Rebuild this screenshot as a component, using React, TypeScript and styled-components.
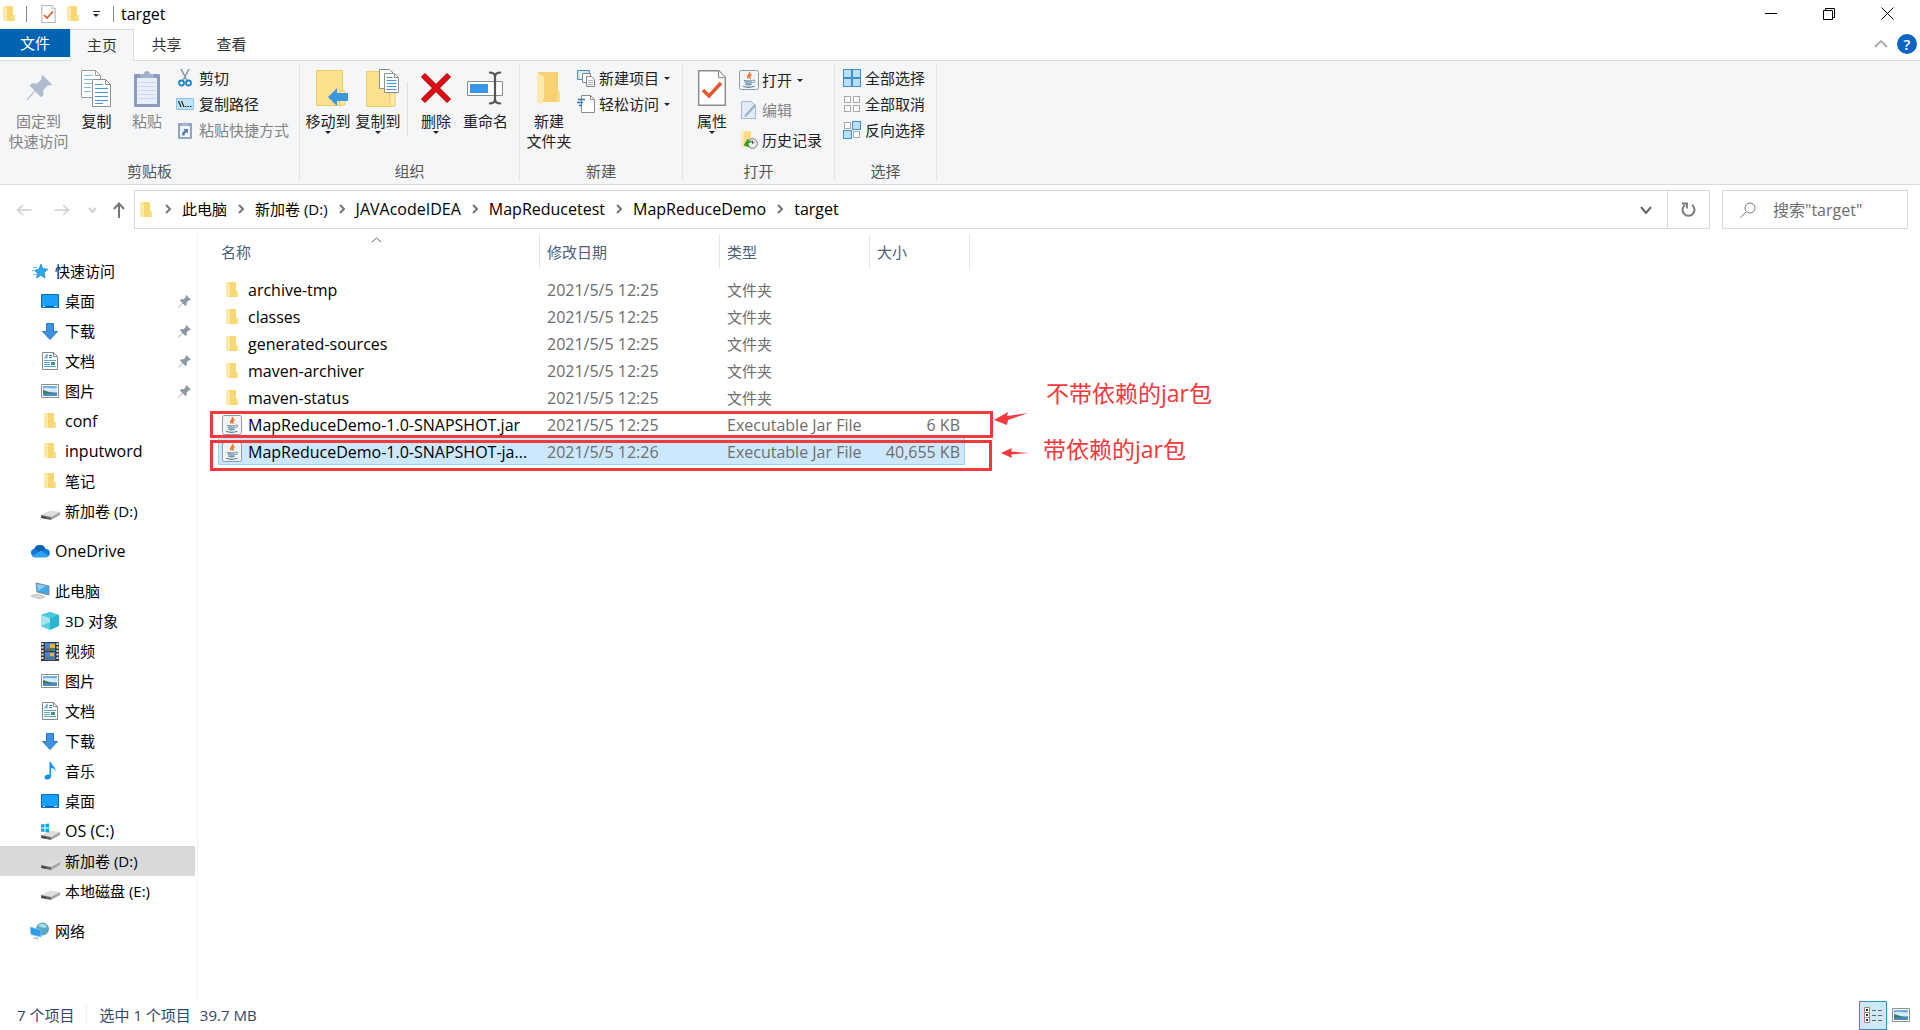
import React from "react";
import styled, { createGlobalStyle, css } from "styled-components";

const GlobalStyle = createGlobalStyle`
  *, *::before, *::after { box-sizing: border-box; }
  body {
    margin: 0;
    background: #fff;
    color: #000;
    font-family: "Open Sans", "Noto Sans CJK SC", sans-serif;
    font-size: 15px;
    line-height: 20px;
  }
  button, input {
    font: inherit;
    color: inherit;
    background: none;
    border: 0;
    padding: 0;
    margin: 0;
  }
  a { color: inherit; text-decoration: none; }
  svg { display: block; flex: none; }
`;

/* ---------- icons ---------- */

const FolderIcon = ({ w = 12, h = 16 }: { w?: number; h?: number }) => (
  <svg width={w} height={h} viewBox="0 0 12 16">
    <path d="M0 0h10v9h2v6H2L0 14z" fill="#f8d775" />
    <path d="M0 0h3l1 3v12.500L0 14z" fill="#fde9a9" />
    <path d="M10 9h2v6h-2z" fill="#fbe08c" />
  </svg>
);

const BigFolderIcon = () => (
  <svg width="26" height="36" viewBox="0 0 26 36">
    <path d="M2 2h20v19l2 1v10H7z" fill="#f6d275" />
    <path d="M1 2l7 5v21l-2 7-5-3z" fill="#fdeab0" />
    <path d="M22 21l2 1v10h-3z" fill="#fbdf8d" />
  </svg>
);

const CheckPageIcon = ({ w, h }: { w: number; h: number }) => (
  <svg width={w} height={h} viewBox="0 0 28 36">
    <path d="M.7.7h20l6.600 6.600v28H.7z" fill="#fff" stroke="#8a8a8a" strokeWidth="1.400" />
    <path d="M20.500.7v7h6.800" fill="#f2f2f2" stroke="#8a8a8a" strokeWidth="1" />
    <path d="M5 20l6 6L23 13" fill="none" stroke="#e2582d" strokeWidth="3.500" />
  </svg>
);

const PinIcon = ({ size, color }: { size: number; color: string }) => (
  <svg width={size} height={size} viewBox="0 0 26 26">
    <path d="M16.500 0L26 9.500l-3 1.200-1.200-.4-4.600 4.600.3 5-2.500 2.300-5.700-5.700L2 24.500l-2 1.500 1.200-2.400 7.500-8L3.500 10.500 6 8.300l5.200.1 4.500-4.400-.5-1.400z" fill={color} />
  </svg>
);

const CopyIcon = () => (
  <svg width="31" height="37" viewBox="0 0 31 37">
    <path d="M.5.5h14l5 5v22H.5z" fill="#fff" stroke="#9b9b9b" />
    <path d="M14.500.5v5h5" fill="none" stroke="#9b9b9b" />
    <path d="M3 5.500h9M3 9.500h9M3 13.500h9M3 17.500h7M3 21.500h7" stroke="#8ab6e8" />
    <path d="M11.500 9.500h13l5 5v22h-18z" fill="#fff" stroke="#8f8f8f" />
    <path d="M24.500 9.500v5h5" fill="none" stroke="#8f8f8f" />
    <path d="M14 14.500h8M14 18.500h13M14 22.500h13M14 26.500h13M14 30.500h13M14 33.500h8" stroke="#4c93dd" />
  </svg>
);

const PasteIcon = () => (
  <svg width="26" height="37" viewBox="0 0 26 37">
    <rect y="4" width="26" height="33" rx="1" fill="#8a9dbf" />
    <path d="M3 8h20v26H3z" fill="#e9eff8" />
    <path d="M4 12.500h18M4 16.500h18M4 20.500h18M4 24.500h18M4 28.500h18" stroke="#cdd9ea" />
    <path d="M6 8V4h4a3 3 0 0 1 6 0h4v4z" fill="#a3b2cc" />
  </svg>
);

const ScissorsIcon = () => (
  <svg width="14" height="18" viewBox="0 0 14 18">
    <path d="M3 0l6 11.500M11 0L5 11.500" stroke="#8d99a6" strokeWidth="1.600" />
    <circle cx="3.500" cy="14" r="2.500" fill="none" stroke="#1f86c9" strokeWidth="1.800" />
    <circle cx="10.500" cy="14" r="2.500" fill="none" stroke="#1f86c9" strokeWidth="1.800" />
  </svg>
);

const PathIcon = () => (
  <svg width="18" height="12" viewBox="0 0 18 12">
    <path d="M.5.5h17v11H.5z" fill="#bfe3fb" stroke="#8fc3e8" />
    <path d="M2.500 3l2.500 6M5.500 3l2.500 6" stroke="#222" strokeWidth="1.200" />
    <path d="M9 8.500h1.500M11.500 8.500H13M14 8.500h1.500" stroke="#222" />
  </svg>
);

const PasteShortcutIcon = () => (
  <svg width="14" height="18" viewBox="0 0 14 18">
    <rect y="2" width="14" height="16" rx="1" fill="#91a5c6" />
    <path d="M2 5h10v11H2z" fill="#eef3fa" />
    <path d="M4 5V2h2a1.200 1.200 0 0 1 2 0h2v3z" fill="#a9b7cf" />
    <path d="M4 14.500c0-3 .5-4 2.500-4.800L5.500 8H10v4.500L8.800 11.200C7 12 6.500 13 6.500 14.500z" fill="#5f7fae" />
  </svg>
);

const MoveToIcon = () => (
  <svg width="40" height="37" viewBox="-8 0 40 37">
    <path d="M.5.5h26v35H.5z" fill="#fbe18c" stroke="#eccb6a" />
    <path d="M24 21h5v14h-5z" fill="#fde9a9" stroke="#eccb6a" />
    <path d="M12 27l9-9v5h11v8H21v5z" fill="#3c96e4" />
  </svg>
);

const CopyToIcon = () => (
  <svg width="41" height="38" viewBox="-8 0 41 38">
    <path d="M.5 2.500h26v35H.5z" fill="#fbe18c" stroke="#eccb6a" />
    <path d="M24 24h5v13h-5z" fill="#fde9a9" stroke="#eccb6a" />
    <path d="M13.500.5h10l4 4v15h-14z" fill="#fff" stroke="#8f8f8f" />
    <path d="M18.500 4.500h10l4 4v15h-14z" fill="#fff" stroke="#8f8f8f" />
    <path d="M28.500 4.500v4h4" fill="none" stroke="#8f8f8f" />
    <path d="M20.500 8.500h6M20.500 11.500h10M20.500 14.500h10M20.500 17.500h10M20.500 20.500h10" stroke="#4c93dd" />
  </svg>
);

const DeleteIcon = () => (
  <svg width="32" height="32" viewBox="0 0 32 32">
    <path d="M3 3l26 26M29 3L3 29" stroke="#a5161c" strokeWidth="6" />
    <path d="M3 3l26 26M29 3L3 29" stroke="#e00b17" strokeWidth="4" />
  </svg>
);

const RenameIcon = () => (
  <svg width="37" height="34" viewBox="0 0 37 34">
    <path d="M.5 10.500h35v14H.5z" fill="#fff" stroke="#8b8b8b" />
    <path d="M3 13h18v9H3z" fill="#3a97e8" />
    <path d="M22 1.500c4 0 6 1 6 4v23c0 3-2 4-6 4M34 1.500c-4 0-6 1-6 4v23c0 3 2 4 6 4" fill="none" stroke="#555" strokeWidth="2.200" />
  </svg>
);

const NewItemIcon = () => (
  <svg width="18" height="18" viewBox="0 0 18 18">
    <path d="M.5 1.500h12v9H.5z" fill="#cfe7f3" stroke="#4f90ad" />
    <path d="M3 4h5v4H3z" fill="#fff" />
    <path d="M5.500 4.500h8v9h-8z" fill="#fff" stroke="#888" />
    <path d="M9.500 7.500h5l3 3v7h-8z" fill="#fff" stroke="#888" />
    <path d="M11 11.500h5M11 13.500h5M11 15.500h5" stroke="#a5b8c9" />
  </svg>
);

const EasyAccessIcon = () => (
  <svg width="18" height="18" viewBox="0 0 18 18">
    <path d="M4.500.5h9l4 4v13h-13z" fill="#fff" stroke="#8b8b8b" />
    <path d="M13.500.5v4h4" fill="none" stroke="#8b8b8b" />
    <path d="M1 4.500h7M0 7.500h6M2 10.500h3" stroke="#2f78b7" strokeWidth="1.500" />
  </svg>
);

const JavaIcon = () => (
  <svg width="20" height="20" viewBox="0 0 20 20">
    <rect x=".5" y=".5" width="19" height="19" rx="2" fill="#f3f4f5" stroke="#8f9aa5" />
    <path d="M10.500 2c1.500 2-3 3.500-1.500 6.500M12.500 4.500c-2 1-2.500 2-1 4" fill="none" stroke="#e8752a" strokeWidth="1.600" />
    <path d="M5 10.500c1 .8 7 .8 8.500 0M6 12.500c2 .8 5 .8 7 0M6.500 14.300c1.500.7 4 .7 6 0M4 16.300c3 1.200 8 1.200 11.500 0" fill="none" stroke="#5482a1" strokeWidth="1.200" />
    <path d="M14 10c2.500-.3 2 2.300-.5 2.600" fill="none" stroke="#5482a1" />
  </svg>
);

const EditIcon = () => (
  <svg width="16" height="18" viewBox="0 0 16 18">
    <path d="M.5.5h10l4 4v13H.5z" fill="#e3ebf6" stroke="#a8b8cf" />
    <path d="M3 15L13.500 3l2 1.500L5 16z" fill="#9db0cd" />
  </svg>
);

const HistoryIcon = () => (
  <svg width="18" height="18" viewBox="0 0 18 18">
    <path d="M1 0h10v16H1z" fill="#f9dc85" />
    <path d="M1 0h3v17l-3-2z" fill="#fdebb0" />
    <circle cx="12.500" cy="12.500" r="4.800" fill="#eee" stroke="#777" />
    <path d="M12.500 9.500v3l2-1.500" fill="none" stroke="#555" />
    <path d="M4 14l4-6v2.500c2-1 3-.5 4 .5-3 0-4 1-4 2.500l1.500 2.500z" fill="#28a428" stroke="#1d861d" strokeWidth=".5" />
  </svg>
);

type SquareState = [boolean, boolean, boolean, boolean];
const SelectIcon = ({ cells }: { cells: SquareState }) => {
  const spots = [[0, 0], [9, 0], [0, 9], [9, 9]];
  return (
    <svg width="18" height="18" viewBox="0 0 18 18">
      {spots.map(([x, y], i) =>
        cells[i] ? (
          <rect key={i} x={x + 0.5} y={y + 0.5} width="8" height="8" fill="#b9dffa" stroke="#3d8fd0" />
        ) : (
          <rect key={i} x={x + 1.5} y={y + 1.5} width="6" height="6" fill="#fff" stroke="#a9a9a9" />
        ),
      )}
    </svg>
  );
};

const Chevron = ({ dir, w, h, color, weight = 1 }: { dir: "right" | "down" | "up"; w: number; h: number; color: string; weight?: number }) => {
  const d =
    dir === "right"
      ? `M1 1L${w - 1} ${h / 2}L1 ${h - 1}`
      : dir === "down"
        ? `M1 1L${w / 2} ${h - 1}L${w - 1} 1`
        : `M1 ${h - 1}L${w / 2} 1L${w - 1} ${h - 1}`;
  return (
    <svg width={w} height={h} viewBox={`0 0 ${w} ${h}`}>
      <path d={d} fill="none" stroke={color} strokeWidth={weight} />
    </svg>
  );
};

const Arrow = ({ dir, color }: { dir: "left" | "right"; color: string }) => (
  <svg width="16" height="12" viewBox="0 0 16 12">
    <path d={dir === "left" ? "M7 1L1.500 6L7 11M1.500 6H15.500" : "M9 1l5.500 5L9 11M14.500 6H.5"} fill="none" stroke={color} strokeWidth="1.500" />
  </svg>
);

const UpArrow = () => (
  <svg width="12" height="16" viewBox="0 0 12 16">
    <path d="M1 7l5-5.500L11 7M6 1.500V16" fill="none" stroke="#777" strokeWidth="2" />
  </svg>
);

const RefreshIcon = () => (
  <svg width="15" height="16" viewBox="0 0 15 16">
    <path d="M11 3a6 6 0 1 1-7 0" fill="none" stroke="#777" strokeWidth="2" />
    <path d="M1 1.500h5v5" fill="none" stroke="#777" strokeWidth="1.800" />
  </svg>
);

const SearchIcon = () => (
  <svg width="16" height="16" viewBox="0 0 16 16">
    <circle cx="10" cy="6" r="5" fill="none" stroke="#7a7a7a" />
    <path d="M6.500 9.500L.5 15.500" stroke="#7a7a7a" />
  </svg>
);

const StarIcon = () => (
  <svg width="18" height="18" viewBox="0 0 18 18">
    <path d="M10 2l1.800 4.500 5.200.7-3.800 3.500.8 5.300-4.200-2.700L5.500 16l1.200-4.800L3.500 8.500l4.500-1.500z" fill="#2da5ec" stroke="#1b83c9" strokeWidth=".7" />
    <path d="M2 5.500h4M1 8.500h3M2 12.500h4" stroke="#6cc2f5" />
  </svg>
);

const DesktopIcon = () => (
  <svg width="18" height="14" viewBox="0 0 18 14">
    <path d="M.5.5h17v13H.5z" fill="#18a0fb" stroke="#0b6fb8" />
    <path d="M1 12.500h16" stroke="#0a5c9c" />
    <path d="M2 12.500h2M13 12.500h3" stroke="#d6efff" />
  </svg>
);

const DownloadIcon = () => (
  <svg width="16" height="17" viewBox="0 0 16 17">
    <path d="M4.500.5h7v8h4L8 16.500.5 8.500h4z" fill="#3c93e2" stroke="#2c78c0" />
  </svg>
);

const DocumentIcon = () => (
  <svg width="16" height="18" viewBox="0 0 16 18">
    <path d="M.5.5h11l4 4v13H.5z" fill="#fff" stroke="#7d8a94" />
    <path d="M11.500.5v4h4" fill="none" stroke="#7d8a94" />
    <path d="M2.500 6.500L5 2.500v4M7 3.500h3M7 5.500h3" fill="none" stroke="#2a87b8" />
    <path d="M2 8.500h12M2 10.500h6M2 12.500h6M2 14.500h12" stroke="#5ea4c8" />
    <path d="M9 10h4v3H9z" fill="#4b8f7a" />
  </svg>
);

const PictureIcon = () => (
  <svg width="18" height="14" viewBox="0 0 18 14">
    <path d="M.5.5h17v13H.5z" fill="#fff" stroke="#8a8f94" />
    <path d="M2 2h14v10H2z" fill="#6fb0ea" />
    <path d="M2 5c3-2 4-1 6-1s4 1 8 0v4H2z" fill="#d4ecfa" />
    <path d="M2 6c4 1 8 3 14 3.500v.5H2z" fill="#3f7a5c" />
    <path d="M2 9.500h14V12H2z" fill="#4d8cc8" />
  </svg>
);

const DriveIcon = ({ windows = false }: { windows?: boolean }) => (
  <svg width="19" height="18" viewBox="0 0 19 18">
    <path d="M0 13l9-4.500 10 1.500-9 5z" fill="#dedede" />
    <path d="M0 13l10 2v3L0 16z" fill="#666" />
    <path d="M1 14.500l4 .8v1.200l-4-.7z" fill="#333" />
    <path d="M10 15l9-5v3l-9 5z" fill="#a6a6a6" />
    {windows && <path d="M0 2.500L3.500 2v3.500H0zM4.500 2L8 1.500v4H4.500zM0 6.500h3.500V10L0 9.500zM4.500 6.500H8v4L4.500 10z" fill="#12a5ea" />}
  </svg>
);

const CloudIcon = () => (
  <svg width="20" height="14" viewBox="0 0 20 14">
    <path d="M4 12.500a4 4 0 0 1 .3-7.800A6 6 0 0 1 15.500 5 4 4 0 0 1 16 13H5z" fill="#1478d4" />
    <path d="M4.300 4.700A6 6 0 0 1 15.500 5l-6 3.500z" fill="#0f5fb0" />
    <path d="M2 12l9-5.500 7.500 5A4 4 0 0 1 16 13.500H4.500A4 4 0 0 1 2 12z" fill="#2ba3ee" />
  </svg>
);

const PcIcon = () => (
  <svg width="20" height="18" viewBox="0 0 20 18">
    <path d="M6 1l13 3v9L7 10z" fill="#3fa7ea" stroke="#7b8d9b" />
    <path d="M7 2l9 2-8 5z" fill="#8bcdf5" />
    <path d="M1 14l6-2 8 2.500-5 2.500z" fill="#d9d9d9" stroke="#aaa" strokeWidth=".6" />
  </svg>
);

const CubeIcon = () => (
  <svg width="18" height="18" viewBox="0 0 18 18">
    <path d="M9 0l9 3v11l-9 4-9-4V3z" fill="#28b5cf" />
    <path d="M0 3l9-3 9 3-9 3z" fill="#49c9dd" />
    <path d="M0 3l9 3v12l-9-4z" fill="#a5e6ee" />
    <path d="M0 14l9-4v8z" fill="#5acddd" />
  </svg>
);

const VideoIcon = () => (
  <svg width="18" height="19" viewBox="0 0 18 19">
    <path d="M0 0h18v19H0z" fill="#3a3a3a" />
    <path d="M4 1h10v8H4zM4 10h10v8H4z" fill="#4a7fe0" />
    <path d="M9 2h5v4H9zM9 11h4v3H9z" fill="#e7b52c" />
    <path d="M5 6h8v3H5zM5 15h8v2H5z" fill="#4c7a5a" />
    <path d="M1.500 1v17M16.500 1v17" stroke="#e8e8e8" strokeWidth="2" strokeDasharray="2 1.500" />
  </svg>
);

const MusicIcon = () => (
  <svg width="13" height="18" viewBox="0 0 13 18">
    <path d="M5.500 0H7c.5 4 5 4.500 4.500 9.500C11 7 9 6 7 6v9c0 3-6.500 3.500-6.500.5 0-2.500 3-3.500 5-2.500z" fill="#1590e8" />
  </svg>
);

const NetworkIcon = () => (
  <svg width="20" height="18" viewBox="0 0 20 18">
    <circle cx="12.500" cy="7" r="6.500" fill="#5aa9c4" />
    <path d="M8 4c3-4 8-2 9 1-2 2-6 0-9-1z" fill="#a9dcea" />
    <path d="M0 5l11 3v7L1 12.500z" fill="#2e9be6" stroke="#7cc6f4" strokeWidth=".8" />
    <path d="M4 15l5 1-1 1.500-5-1z" fill="#b9c3ca" />
  </svg>
);

const DetailsIcon = () => (
  <svg width="19" height="17" viewBox="0 0 19 17">
    <path d="M.5.500h5v5h-5zM.5 5.500h5v5h-5zM.5 10.500h5v5h-5z" fill="#fff" stroke="#9a8d80" />
    <path d="M2 2h2v2H2zM2 7h2v2H2zM2 12h2v2H2z" fill="#333" />
    <path d="M8 3.500h4M14 3.500h4M8 8.500h4M14 8.500h4M8 13.500h4M14 13.500h4" stroke="#667" />
  </svg>
);

const Caret = styled.span`
  width: 0;
  height: 0;
  border: 3px solid transparent;
  border-top-color: #222;
  border-bottom: 0;
`;

/* Purely Latin labels are set one step larger than Chinese ones. */
const isLatin = (s: string) => !/[\u4e00-\u9fff]/.test(s);

const Label = styled.span<{ $latin: boolean }>`
  font-size: ${(p) => (p.$latin ? 16 : 15)}px;
`;

const Text = ({ children }: { children: string }) => <Label $latin={isLatin(children)}>{children}</Label>;

/* ---------- frame ---------- */

const Window = styled.div`
  display: flex;
  flex-direction: column;
  min-height: 100vh;
`;

const TitleBar = styled.header`
  display: flex;
  align-items: center;
  height: 29px;
  padding: 0 4px 2px 3px;
`;

const QuickTools = styled.div`
  display: flex;
  align-items: center;
  gap: 11px;
`;

const Divider = styled.span`
  width: 1px;
  height: 16px;
  margin: 0 3px 0 0;
  background: #8a8a8a;
`;

const Menu = styled.button`
  display: flex;
  flex-direction: column;
  align-items: center;
  gap: 2px;
  width: 12px;
  &::before { content: ""; width: 7px; height: 1px; background: #222; }
`;

const Title = styled.h1`
  margin: 0 auto 0 4px;
  font-size: 16px;
  font-weight: 400;
`;

const WindowButton = styled.button`
  display: grid;
  place-items: center;
  width: 58px;
  height: 27px;
`;

const TabBar = styled.nav`
  display: flex;
  height: 32px;
  border-bottom: 1px solid #dadbdc;
`;

const Tab = styled.button<{ $kind?: "file" | "active" }>`
  width: 65px;
  height: 31px;
  padding-bottom: 2px;
  color: #333;
  ${(p) => p.$kind === "file" && css`
    width: 70px;
    height: 28px;
    padding-bottom: 0;
    background: #0063b1;
    color: #fff;
  `}
  ${(p) => p.$kind === "active" && css`
    width: 64px;
    height: 32px;
    background: #f5f6f7;
    border: 1px solid #dadbdc;
    border-bottom: 0;
  `}
`;

const TabTools = styled.div`
  display: flex;
  align-items: center;
  gap: 9px;
  margin-left: auto;
  padding: 0 3px 1px 0;
`;

const HelpButton = styled.button`
  width: 20px;
  height: 20px;
  border-radius: 50%;
  background: #0b64c0;
  color: #fff;
  font-weight: 600;
`;

/* ---------- ribbon ---------- */

const Ribbon = styled.section`
  display: flex;
  height: 124px;
  padding: 3px 0;
  background: #f5f6f7;
  border-bottom: 1px solid #dadbdc;
`;

const Group = styled.section`
  display: flex;
  flex-direction: column;
  justify-content: space-between;
  border-right: 1px solid #e2e3e4;
`;

const GroupBody = styled.div<{ $pad: string }>`
  display: flex;
  align-items: flex-start;
  padding: ${(p) => p.$pad};
`;

const GroupName = styled.h2`
  margin: 0;
  font-size: 15px;
  font-weight: 400;
  color: #555;
  text-align: center;
`;

const BigButton = styled.button<{ $w: number; $off?: boolean }>`
  display: flex;
  flex-direction: column;
  align-items: center;
  width: ${(p) => p.$w}px;
  padding-top: 4px;
  color: ${(p) => (p.$off ? "#838383" : "#222")};
  white-space: nowrap;
`;

const BigIcon = styled.span`
  display: grid;
  place-items: center;
  height: 40px;
  margin-bottom: 3px;
`;

const SmallList = styled.div<{ $h: number }>`
  display: flex;
  flex-direction: column;
  padding-top: 1px;
  button { height: ${(p) => p.$h}px; }
`;

const SmallButton = styled.button<{ $off?: boolean }>`
  display: flex;
  align-items: center;
  gap: 2px;
  color: ${(p) => (p.$off ? "#838383" : "#222")};
  white-space: nowrap;
  ${Caret} { margin-left: 3px; }
`;

const SmallIcon = styled.span<{ $w: number }>`
  display: grid;
  place-items: center;
  width: ${(p) => p.$w}px;
`;

const InnerRule = styled.span`
  width: 1px;
  height: 54px;
  margin: 18px 4px 0;
  background: #dcdddf;
`;

interface BigProps { icon: React.ReactNode; lines: string[]; w: number; off?: boolean; menu?: boolean }
const Big = ({ icon, lines, w, off, menu }: BigProps) => (
  <BigButton $w={w} $off={off}>
    <BigIcon>{icon}</BigIcon>
    {lines.map((l) => <span key={l}>{l}</span>)}
    {menu && <Caret />}
  </BigButton>
);

interface SmallProps { icon: React.ReactNode; text: string; w?: number; off?: boolean; menu?: boolean }
const Small = ({ icon, text, w = 22, off, menu }: SmallProps) => (
  <SmallButton $off={off}>
    <SmallIcon $w={w}>{icon}</SmallIcon>
    <span>{text}</span>
    {menu && <Caret />}
  </SmallButton>
);

/* ---------- address row ---------- */

const AddressRow = styled.div`
  display: flex;
  align-items: center;
  height: 49px;
  padding: 0 12px 0 16px;
`;

const History = styled.div`
  display: flex;
  align-items: center;
  width: 118px;
  gap: 22px;
  button:nth-child(3) { margin: 0 -6px 0 -4px; }
`;

const AddressBox = styled.div`
  display: flex;
  flex: 1;
  align-items: center;
  height: 39px;
  padding-left: 5px;
  border: 1px solid #d9d9d9;
`;

const Crumbs = styled.ol`
  display: flex;
  flex: 1;
  margin: 0;
  padding: 0 0 2px 2px;
  list-style: none;
  li { display: flex; align-items: center; }
`;

const CrumbGap = styled.span`
  display: grid;
  place-items: center;
  width: 28px;
`;

const BoxButton = styled.button<{ $line?: boolean }>`
  display: grid;
  place-items: center;
  width: 42px;
  height: 37px;
  ${(p) => p.$line && css`border-left: 1px solid #d9d9d9;`}
`;

const SearchBox = styled.label`
  display: flex;
  align-items: center;
  gap: 17px;
  width: 186px;
  height: 39px;
  margin-left: 12px;
  padding: 0 17px;
  border: 1px solid #d9d9d9;
  input { width: 110px; outline: 0; font-size: 16px; }
  input::placeholder { color: #6d6d6d; opacity: 1; }
`;

/* ---------- navigation pane ---------- */

const Body = styled.div`
  display: flex;
  flex: 1;
`;

const Sidebar = styled.nav`
  display: flex;
  flex-direction: column;
  gap: 10px;
  width: 198px;
  padding: 22px 2px 0 0;
  border-right: 1px solid #f3f3f3;
`;

const NavGroup = styled.ul`
  margin: 0;
  padding: 0;
  list-style: none;
`;

const NavLink = styled.a<{ $root?: boolean; $current?: boolean }>`
  display: flex;
  align-items: center;
  height: 30px;
  padding: 0 4px 0 ${(p) => (p.$root ? 29 : 39)}px;
  background: ${(p) => (p.$current ? "#d9d9d9" : "transparent")};
  white-space: nowrap;
  > svg { margin-left: auto; }
`;

const NavIcon = styled.span`
  display: grid;
  place-items: center;
  width: 22px;
  margin-right: 4px;
`;

interface Nav { icon: React.ReactNode; text: string; pinned?: boolean; current?: boolean }

const navGroups: Nav[][] = [
  [
    { icon: <StarIcon />, text: "快速访问" },
    { icon: <DesktopIcon />, text: "桌面", pinned: true },
    { icon: <DownloadIcon />, text: "下载", pinned: true },
    { icon: <DocumentIcon />, text: "文档", pinned: true },
    { icon: <PictureIcon />, text: "图片", pinned: true },
    { icon: <FolderIcon />, text: "conf" },
    { icon: <FolderIcon />, text: "inputword" },
    { icon: <FolderIcon />, text: "笔记" },
    { icon: <DriveIcon />, text: "新加卷 (D:)" },
  ],
  [{ icon: <CloudIcon />, text: "OneDrive" }],
  [
    { icon: <PcIcon />, text: "此电脑" },
    { icon: <CubeIcon />, text: "3D 对象" },
    { icon: <VideoIcon />, text: "视频" },
    { icon: <PictureIcon />, text: "图片" },
    { icon: <DocumentIcon />, text: "文档" },
    { icon: <DownloadIcon />, text: "下载" },
    { icon: <MusicIcon />, text: "音乐" },
    { icon: <DesktopIcon />, text: "桌面" },
    { icon: <DriveIcon windows />, text: "OS (C:)" },
    { icon: <DriveIcon />, text: "新加卷 (D:)", current: true },
    { icon: <DriveIcon />, text: "本地磁盘 (E:)" },
  ],
  [{ icon: <NetworkIcon />, text: "网络" }],
];

/* ---------- file list ---------- */

const Files = styled.main`
  position: relative;
  flex: 1;
  padding-left: 20px;
`;

const FileTable = styled.table`
  width: 752px;
  table-layout: fixed;
  border-collapse: separate;
  border-spacing: 0;
  text-align: left;
`;

const HeadCell = styled.th<{ $w: number; $first?: boolean }>`
  width: ${(p) => p.$w}px;
  height: 35px;
  padding: 0 0 0 ${(p) => (p.$first ? 3 : 7)}px;
  border-right: 1px solid #e5e5e5;
  font-weight: 400;
  color: #4c607a;
`;

const SortMark = styled.span`
  position: absolute;
  top: 3px;
  left: 173px;
`;

const Spacer = styled.tbody`
  td { height: 7px; padding: 0; }
`;

const Row = styled.tr<{ $selected?: boolean }>`
  td {
    height: 27px;
    padding: 0 0 0 7px;
    color: #6d6d6d;
    white-space: nowrap;
  }
  td:first-child { padding-left: 4px; color: #000; }
  td:last-child {
    padding-right: 5px;
    border-right: 5px solid transparent;
    background-clip: padding-box;
    text-align: right;
  }
  ${(p) => p.$selected && css`
    td {
      background-color: #cce8ff;
      box-shadow: inset 0 -1px #99d1ff;
    }
    td:first-child { box-shadow: inset 1px -1px #99d1ff; }
    td:last-child { box-shadow: inset -1px -1px #99d1ff; }
  `}
`;

const FileName = styled.span`
  display: flex;
  align-items: center;
  gap: 6px;
`;

const FileIcon = styled.span`
  display: grid;
  place-items: center;
  width: 20px;
`;

const MarkBox = styled.div<{ $top: number; $w: number; $h: number }>`
  position: absolute;
  left: 12px;
  top: ${(p) => p.$top}px;
  width: ${(p) => p.$w}px;
  height: ${(p) => p.$h}px;
  border: 3px solid #f03a3c;
`;

const MarkArrow = styled.svg<{ $left: number; $top: number }>`
  position: absolute;
  left: ${(p) => p.$left}px;
  top: ${(p) => p.$top}px;
`;

const MarkText = styled.p<{ $left: number; $top: number }>`
  position: absolute;
  left: ${(p) => p.$left}px;
  top: ${(p) => p.$top}px;
  margin: 0;
  font-size: 23px;
  line-height: 30px;
  color: #f5383b;
  white-space: nowrap;
`;

const folders = ["archive-tmp", "classes", "generated-sources", "maven-archiver", "maven-status"];
const files = [
  ...folders.map((name) => ({ name, folder: true, date: "2021/5/5 12:25", type: "文件夹", size: "" })),
  { name: "MapReduceDemo-1.0-SNAPSHOT.jar", folder: false, date: "2021/5/5 12:25", type: "Executable Jar File", size: "6 KB" },
  { name: "MapReduceDemo-1.0-SNAPSHOT-ja...", folder: false, date: "2021/5/5 12:26", type: "Executable Jar File", size: "40,655 KB" },
];

/* ---------- status bar ---------- */

const StatusBar = styled.footer`
  display: flex;
  align-items: center;
  height: 30px;
  padding: 0 5px 0 17px;
  color: #34466a;
`;

const StatusItem = styled.span<{ $line?: boolean }>`
  margin-right: 9px;
  ${(p) => p.$line && css`
    margin-right: 12px;
    padding-right: 12px;
    border-right: 1px solid #f0f0f0;
  `}
`;

const ViewButtons = styled.div`
  display: flex;
  margin-left: auto;
`;

const ViewButton = styled.button<{ $on?: boolean }>`
  display: grid;
  place-items: center;
  width: 28px;
  height: 29px;
  ${(p) => p.$on && css`
    background: #cde8f6;
    border: 1px solid #2f93c4;
  `}
`;

export default function App() {
  const crumbs = ["此电脑", "新加卷 (D:)", "JAVAcodeIDEA", "MapReducetest", "MapReduceDemo", "target"];
  return (
    <Window>
      <GlobalStyle />
      <TitleBar>
        <QuickTools>
          <FolderIcon />
          <Divider />
          <CheckPageIcon w={15} h={18} />
          <FolderIcon />
          <Menu aria-label="自定义快速访问工具栏"><Caret /></Menu>
          <Divider />
        </QuickTools>
        <Title>target</Title>
        <WindowButton aria-label="最小化">
          <svg width="12" height="12" viewBox="0 0 12 12"><path d="M0 5.500h12" stroke="#000" /></svg>
        </WindowButton>
        <WindowButton aria-label="还原">
          <svg width="12" height="12" viewBox="0 0 12 12"><path d="M.5 2.500h9v9h-9zM2.500 2.500v-2h9v9h-2" fill="none" stroke="#000" /></svg>
        </WindowButton>
        <WindowButton aria-label="关闭">
          <svg width="13" height="13" viewBox="0 0 13 13"><path d="M.5.5l12 12M12.500.5l-12 12" stroke="#000" /></svg>
        </WindowButton>
      </TitleBar>

      <TabBar>
        <Tab $kind="file">文件</Tab>
        <Tab $kind="active">主页</Tab>
        <Tab>共享</Tab>
        <Tab>查看</Tab>
        <TabTools>
          <button aria-label="最小化功能区"><Chevron dir="up" w={14} h={8} color="#b0b0b0" weight={2} /></button>
          <HelpButton>?</HelpButton>
        </TabTools>
      </TabBar>

      <Ribbon>
        <Group>
          <GroupBody $pad="0 10px 0 5px">
            <Big w={67} off icon={<PinIcon size={26} color="#b0bccd" />} lines={["固定到", "快速访问"]} />
            <Big w={49} icon={<CopyIcon />} lines={["复制"]} />
            <Big w={52} off icon={<PasteIcon />} lines={["粘贴"]} />
            <SmallList $h={26}>
              <Small w={24} icon={<ScissorsIcon />} text="剪切" />
              <Small w={24} icon={<PathIcon />} text="复制路径" />
              <Small w={24} off icon={<PasteShortcutIcon />} text="粘贴快捷方式" />
            </SmallList>
          </GroupBody>
          <GroupName>剪贴板</GroupName>
        </Group>
        <Group>
          <GroupBody $pad="0 8px 0 3px">
            <Big w={50} menu icon={<MoveToIcon />} lines={["移动到"]} />
            <Big w={50} menu icon={<CopyToIcon />} lines={["复制到"]} />
            <InnerRule />
            <Big w={48} menu icon={<DeleteIcon />} lines={["删除"]} />
            <Big w={51} icon={<RenameIcon />} lines={["重命名"]} />
          </GroupBody>
          <GroupName>组织</GroupName>
        </Group>
        <Group>
          <GroupBody $pad="0 12px 0 3px">
            <Big w={52} icon={<BigFolderIcon />} lines={["新建", "文件夹"]} />
            <SmallList $h={26}>
              <Small menu icon={<NewItemIcon />} text="新建项目" />
              <Small menu icon={<EasyAccessIcon />} text="轻松访问" />
            </SmallList>
          </GroupBody>
          <GroupName>新建</GroupName>
        </Group>
        <Group>
          <GroupBody $pad="0 12px 0 3px">
            <Big w={52} menu icon={<CheckPageIcon w={28} h={36} />} lines={["属性"]} />
            <SmallList $h={30}>
              <Small menu icon={<JavaIcon />} text="打开" />
              <Small off icon={<EditIcon />} text="编辑" />
              <Small icon={<HistoryIcon />} text="历史记录" />
            </SmallList>
          </GroupBody>
          <GroupName>打开</GroupName>
        </Group>
        <Group>
          <GroupBody $pad="0 11px 0 6px">
            <SmallList $h={26}>
              <Small icon={<SelectIcon cells={[true, true, true, true]} />} text="全部选择" />
              <Small icon={<SelectIcon cells={[false, false, false, false]} />} text="全部取消" />
              <Small icon={<SelectIcon cells={[false, true, true, false]} />} text="反向选择" />
            </SmallList>
          </GroupBody>
          <GroupName>选择</GroupName>
        </Group>
      </Ribbon>

      <AddressRow>
        <History>
          <button aria-label="后退"><Arrow dir="left" color="#cfcfcf" /></button>
          <button aria-label="前进"><Arrow dir="right" color="#cfcfcf" /></button>
          <button aria-label="最近位置"><Chevron dir="down" w={9} h={6} color="#cfcfcf" weight={2} /></button>
          <button aria-label="上移"><UpArrow /></button>
        </History>
        <AddressBox>
          <FolderIcon />
          <Crumbs>
            {crumbs.map((c) => (
              <li key={c}>
                <CrumbGap><Chevron dir="right" w={6} h={10} color="#777" weight={2} /></CrumbGap>
                <button><Text>{c}</Text></button>
              </li>
            ))}
          </Crumbs>
          <BoxButton aria-label="以前的位置"><Chevron dir="down" w={12} h={8} color="#666" weight={2} /></BoxButton>
          <BoxButton $line aria-label="刷新"><RefreshIcon /></BoxButton>
        </AddressBox>
        <SearchBox>
          <SearchIcon />
          <input type="text" aria-label="搜索" placeholder={'搜索"target"'} />
        </SearchBox>
      </AddressRow>

      <Body>
        <Sidebar>
          {navGroups.map((group, g) => (
            <NavGroup key={g}>
              {group.map((n, i) => (
                <li key={i}>
                  <NavLink href="#" $root={i === 0} $current={n.current}>
                    <NavIcon>{n.icon}</NavIcon>
                    <Text>{n.text}</Text>
                    {n.pinned && <PinIcon size={13} color="#8c98a3" />}
                  </NavLink>
                </li>
              ))}
            </NavGroup>
          ))}
        </Sidebar>
        <Files>
          <FileTable>
            <thead>
              <tr>
                <HeadCell $w={322} $first>名称</HeadCell>
                <HeadCell $w={180}>修改日期</HeadCell>
                <HeadCell $w={150}>类型</HeadCell>
                <HeadCell $w={100}>大小</HeadCell>
              </tr>
            </thead>
            <Spacer><tr><td colSpan={4} /></tr></Spacer>
            <tbody>
              {files.map((f, i) => (
                <Row key={f.name} $selected={i === files.length - 1}>
                  <td>
                    <FileName>
                      <FileIcon>{f.folder ? <FolderIcon /> : <JavaIcon />}</FileIcon>
                      <Text>{f.name}</Text>
                    </FileName>
                  </td>
                  <td><Text>{f.date}</Text></td>
                  <td><Text>{f.type}</Text></td>
                  <td><Text>{f.size}</Text></td>
                </Row>
              ))}
            </tbody>
          </FileTable>
          <SortMark><Chevron dir="up" w={11} h={6} color="#666" /></SortMark>
          <MarkBox $top={177} $w={783} $h={27} />
          <MarkBox $top={206} $w={782} $h={31} />
          <MarkArrow $left={796} $top={178} width="34" height="13" viewBox="0 0 34 13">
            <path d="M0 8L14 0l-1 4 21-3-20 7-1 5z" fill="#f5383b" />
          </MarkArrow>
          <MarkArrow $left={803} $top={214} width="28" height="10" viewBox="0 0 28 10">
            <path d="M0 5L11 0l-1 3.500L28 5 10 6.500 11 10z" fill="#f5383b" />
          </MarkArrow>
          <MarkText $left={848} $top={144}>不带依赖的jar包</MarkText>
          <MarkText $left={845} $top={200}>带依赖的jar包</MarkText>
        </Files>
      </Body>

      <StatusBar>
        <StatusItem $line>7 个项目</StatusItem>
        <StatusItem>选中 1 个项目</StatusItem>
        <StatusItem>39.7 MB</StatusItem>
        <ViewButtons>
          <ViewButton $on aria-label="详细信息"><DetailsIcon /></ViewButton>
          <ViewButton aria-label="大图标"><PictureIcon /></ViewButton>
        </ViewButtons>
      </StatusBar>
    </Window>
  );
}
